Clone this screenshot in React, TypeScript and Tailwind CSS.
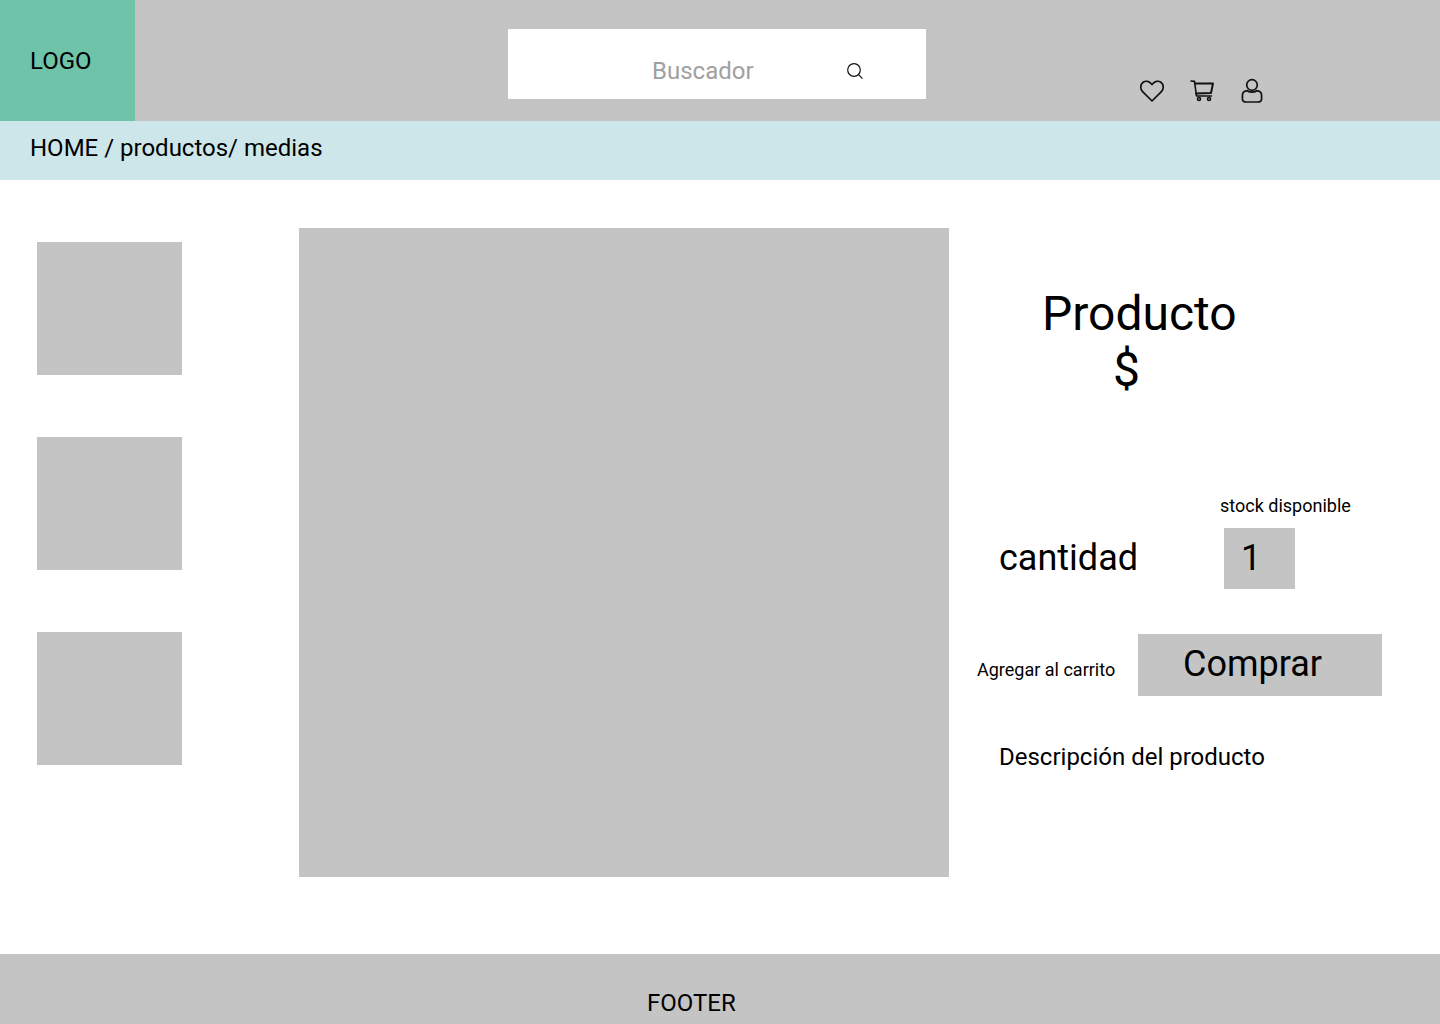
export default function App() {
  return (
    <div className="w-[1440px] h-[1024px] overflow-hidden flex flex-col bg-white text-black font-['Roboto',sans-serif]">
      <header className="h-[121px] shrink-0 flex bg-[#c4c4c4]">
        <div className="w-[135px] bg-[#6fc3a9] pl-[30px] pt-[47px] text-[24px] leading-[28px]">LOGO</div>
        <div className="ml-[373px] mt-[29px] w-[418px] h-[70px] bg-white flex items-start pl-[144px] pt-[28px]">
          <span className="text-[24px] leading-[28px] text-[#a0a0a0]">Buscador</span>
          <svg className="ml-[92px] mt-[5px]" width="18" height="18" viewBox="0 0 18 18" fill="none" stroke="#111" strokeWidth="1.2">
            <circle cx="8" cy="8" r="6.3" />
            <path d="M12.6 12.6 L16.4 16.6" />
          </svg>
        </div>
        <div className="ml-[213px] mt-[78px] flex items-start gap-[24px]">
          <svg width="26" height="26" viewBox="0 0 26 26" fill="none" stroke="#111" strokeWidth="1.7" strokeLinejoin="round">
            <path d="M13 23 L3.6 13.6 C1 11 1.2 6.6 3.8 4.5 C6.6 2.3 10.6 3 13 6.6 C15.4 3 19.4 2.3 22.2 4.5 C24.8 6.6 25 11 22.4 13.6 Z" />
          </svg>
          <svg width="26" height="26" viewBox="0 0 26 26" fill="none" stroke="#111" strokeWidth="1.6" strokeLinejoin="round" strokeLinecap="round">
            <path d="M2 3 L5.5 3.4 L7.5 18 H22.5" />
            <path d="M6 5.4 H24 L22 15 L7 15.6" strokeWidth="2" />
            <circle cx="10" cy="21" r="1.5" />
            <circle cx="20" cy="21" r="1.5" />
          </svg>
          <svg width="26" height="26" viewBox="0 0 26 26" fill="none" stroke="#111" strokeWidth="1.7" strokeLinejoin="round">
            <circle cx="13" cy="7" r="5.3" />
            <path d="M8 12.6 C9.5 14.6 16.5 14.6 18 12.6 C21 13 22.6 15 22.6 17.6 V20.4 C22.6 22.6 21 24 19 24 H7 C5 24 3.4 22.6 3.4 20.4 V17.6 C3.4 15 5 13 8 12.6 Z" />
          </svg>
        </div>
      </header>
      <nav className="h-[59px] shrink-0 bg-[#cde6ea] pl-[30px] pt-[13px] text-[24px] leading-[28px]">HOME / productos/ medias</nav>
      <main className="flex-1 flex">
        <div className="w-[299px] shrink-0 pl-[37px] pt-[62px] flex flex-col gap-[62px]">
          <div className="w-[145px] h-[133px] bg-[#c4c4c4]" />
          <div className="w-[145px] h-[133px] bg-[#c4c4c4]" />
          <div className="w-[145px] h-[133px] bg-[#c4c4c4]" />
        </div>
        <div className="mt-[48px] w-[650px] h-[649px] bg-[#c4c4c4] shrink-0" />
        <div className="flex-1 relative flex flex-col">
          <h1 className="ml-[93px] mt-[106px] text-[48px] leading-[56px] font-normal">Producto</h1>
          <div className="ml-[164px] mt-0 text-[48px] leading-[56px]">$</div>
          <div className="ml-[271px] mt-[97px] text-[18px] leading-[21px]">stock disponible</div>
          <div className="flex items-start mt-[12px]">
            <span className="ml-[50px] mt-[9px] text-[36px] leading-[42px]">cantidad</span>
            <div className="ml-[86px] w-[71px] h-[61px] bg-[#c4c4c4] pl-[17px] pt-[9px] text-[36px] leading-[42px]">1</div>
          </div>
          <div className="flex items-start mt-[45px]">
            <span className="ml-[28px] mt-[25px] text-[18px] leading-[21px] w-[161px] shrink-0">Agregar al carrito</span>
            <button className="w-[244px] h-[62px] bg-[#c4c4c4] pl-[45px] pt-[9px] pb-[11px] text-left text-[36px] leading-[42px]">Comprar</button>
          </div>
          <div className="ml-[50px] mt-[47px] text-[24px] leading-[28px]">Descripción del producto</div>
        </div>
      </main>
      <footer className="h-[70px] shrink-0 bg-[#c4c4c4] pl-[647px] pt-[35px] text-[24px] leading-[28px]">FOOTER</footer>
    </div>
  );
}
